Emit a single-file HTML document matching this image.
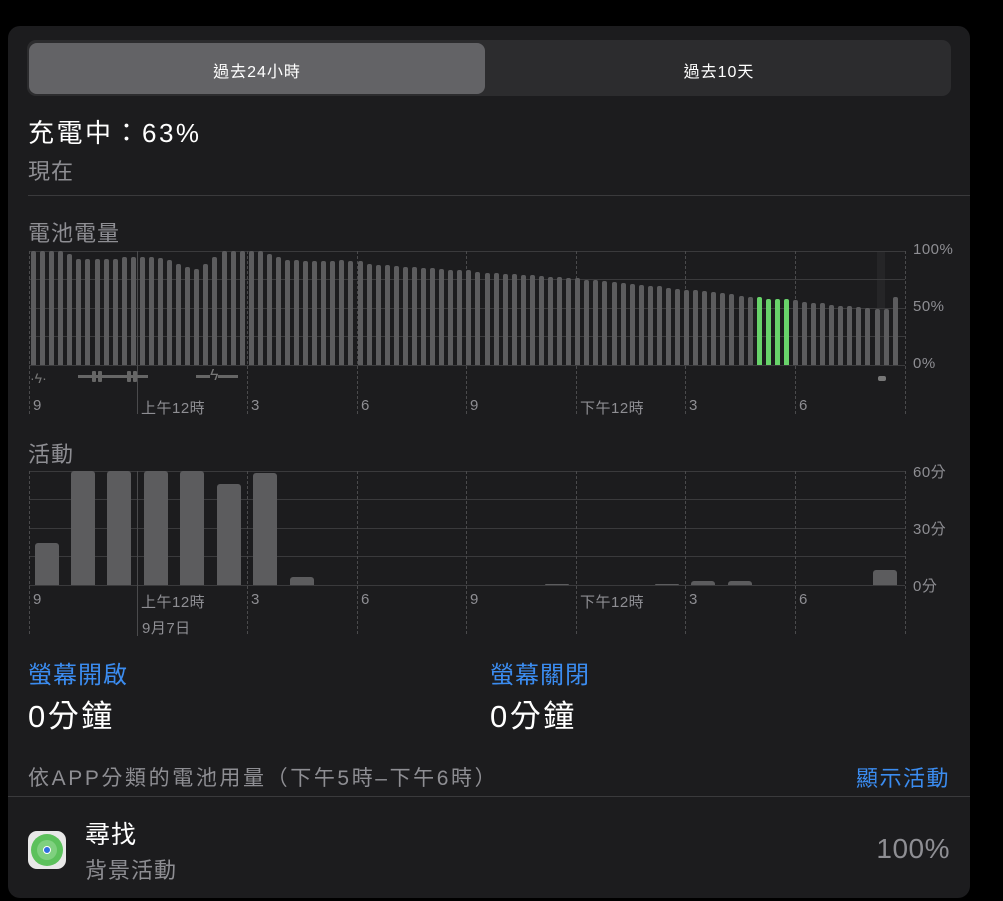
<!DOCTYPE html>
<html><head><meta charset="utf-8"><style>
*{margin:0;padding:0;box-sizing:border-box}
html,body{width:1003px;height:901px;overflow:hidden}
body{background:#000;position:relative;font-family:"Liberation Sans","Noto Sans CJK TC",sans-serif;color:#fff}
.a{position:absolute;white-space:nowrap}
#panel{position:absolute;left:8px;top:26px;width:962px;height:872px;background:#1c1c1e;border-radius:12px}
.g{color:#8e8e93}
.hl{position:absolute;height:1px;background:#3a3a3c}
.vl{position:absolute;width:0;border-left:1px dashed #4a4a4c}
.bar{position:absolute;background:#5c5c5e;border-radius:2px 2px 0 0}
.ax{position:absolute;font-size:15px;color:#8e8e93;letter-spacing:0.5px}
.blue{color:#3b8cf0}
</style></head><body>
<div id="panel"></div>
<div class="a" style="left:27px;top:40px;width:924px;height:56px;background:#2c2c2e;border-radius:9px"></div>
<div class="a" style="left:29px;top:43px;width:456px;height:51px;background:#636366;border-radius:8px"></div>
<div class="a" style="left:29px;top:58px;width:456px;text-align:center;font-size:16px;letter-spacing:1px">過去24小時</div>
<div class="a" style="left:489px;top:58px;width:460px;text-align:center;font-size:16px;letter-spacing:1px">過去10天</div>
<div class="a" style="left:28px;top:113px;font-size:26px;letter-spacing:2.5px">充電中：63%</div>
<div class="a g" style="left:28px;top:154px;font-size:22px;letter-spacing:1px">現在</div>
<div class="hl" style="left:28px;top:195px;width:942px"></div>
<div class="a g" style="left:28px;top:216px;font-size:22px;letter-spacing:1px">電池電量</div>
<div class="a g" style="left:28px;top:437px;font-size:22px;letter-spacing:1px">活動</div>
<div id="c"></div>
<div class="a blue" style="left:28px;top:655px;font-size:24px;letter-spacing:1px">螢幕開啟</div>
<div class="a" style="left:28px;top:691px;font-size:31px;letter-spacing:2.5px">0分鐘</div>
<div class="a blue" style="left:490px;top:655px;font-size:24px;letter-spacing:1px">螢幕關閉</div>
<div class="a" style="left:490px;top:691px;font-size:31px;letter-spacing:2.5px">0分鐘</div>
<div class="a g" style="left:28px;top:762px;font-size:21px;letter-spacing:2.6px">依APP分類的電池用量（下午5時–下午6時）</div>
<div class="a blue" style="right:53px;top:761px;font-size:22px;letter-spacing:1.5px">顯示活動</div>
<div class="hl" style="left:8px;top:796px;width:962px"></div>
<div class="a" style="left:28px;top:831px;width:38px;height:38px;border-radius:9px;background:#e8e8e8"></div>
<div class="a" style="left:31px;top:834px;width:32px;height:32px;border-radius:50%;background:#5cc15c"></div>
<div class="a" style="left:37px;top:840px;width:20px;height:20px;border-radius:50%;background:#7fd07f"></div>
<div class="a" style="left:43px;top:846px;width:8px;height:8px;border-radius:50%;background:#2f6fe0;border:1.5px solid #fff"></div>
<div class="a" style="left:85px;top:815px;font-size:25px;letter-spacing:1px">尋找</div>
<div class="a g" style="left:85px;top:853px;font-size:22px;letter-spacing:1px">背景活動</div>
<div class="a g" style="right:53px;top:833px;font-size:28px;letter-spacing:0.5px">100%</div>
<script>
var c=document.getElementById('c'),h='';
function add(s){h+=s}
var vx=[29,137,247,357,466,576,685,795,905];
add('<div class="a" style="left:877px;top:251px;width:8px;height:114px;background:#252527"></div>');
[251,279,308,336,365].forEach(function(y){add('<div class="hl" style="left:29px;top:'+y+'px;width:876px"></div>')});
[471,499,528,556,585].forEach(function(y){add('<div class="hl" style="left:29px;top:'+y+'px;width:876px"></div>')});
vx.forEach(function(x,i){var st=i==1?'border-left:1px solid #4a4a4c;':'';
add('<div class="vl" style="left:'+x+'px;top:251px;height:163px;'+st+'"></div>');
add('<div class="vl" style="left:'+x+'px;top:471px;height:'+(i==1?165:163)+'px;'+st+'"></div>');});
var bv=[100,100,100,100,97,93,93,93,93,93,95,95,95,95,94,92,89,86,84,89,95,100,100,100,100,100,97,95,92,92,91,91,91,91,92,91,91,89,88,88,87,86,86,85,85,84,83,83,83,82,81,81,80,80,79,79,78,77,77,76,76,75,75,74,73,72,71,70,69,69,68,67,66,66,65,64,63,62,61,60,60,58,58,58,57,55,54,54,53,52,52,51,50,49,49,60];
for(var i=0;i<96;i++){var x=31+i*9.07,hh=bv[i]*114/100;var gr=(i>=80&&i<=83);
add('<div class="bar" style="left:'+x.toFixed(1)+'px;top:'+(365-hh).toFixed(1)+'px;width:5px;height:'+hh.toFixed(1)+'px;background:'+(gr?'#68d36a':'#5c5c5e')+'"></div>');}
add('<div class="a" style="left:878px;top:376px;width:8px;height:5px;border-radius:2px;background:#777"></div>');
add('<div class="a g" style="left:30px;top:370px;font-size:14px;color:#777">·ϟ·</div>');
add('<div class="a" style="left:78px;top:375px;width:70px;height:3px;background:#666"></div>');
[92,98,127,133].forEach(function(x){add('<div class="a" style="left:'+x+'px;top:371px;width:4px;height:11px;background:#666;border-radius:1px"></div>')});
add('<div class="a" style="left:196px;top:375px;width:42px;height:3px;background:#666"></div>');
add('<div class="a" style="left:210px;top:367px;font-size:16px;color:#777;background:#1c1c1e">ϟ</div>');
var av=[[35,22],[71,60],[107,60],[144,60],[180,60],[217,53],[253,59],[290,4],[545,0.6],[655,0.6],[691,2],[728,2],[873,8]];
av.forEach(function(b){var hh=b[1]*114/60;add('<div class="bar" style="left:'+b[0]+'px;top:'+(585-hh).toFixed(1)+'px;width:24px;height:'+hh.toFixed(1)+'px;border-radius:3px 3px 0 0"></div>')});
var lb=['9','上午12時','3','6','9','下午12時','3','6'];
lb.forEach(function(t,i){add('<div class="ax" style="left:'+(vx[i]+4)+'px;top:397px">'+t+'</div>');add('<div class="ax" style="left:'+(vx[i]+4)+'px;top:591px">'+t+'</div>')});
add('<div class="ax" style="left:142px;top:617px">9月7日</div>');
[['100%',241],['50%',298],['0%',355],['60分',461],['30分',518],['0分',575]].forEach(function(l){add('<div class="ax" style="left:913px;top:'+l[1]+'px">'+l[0]+'</div>')});
c.innerHTML=h;
</script>
</body></html>
